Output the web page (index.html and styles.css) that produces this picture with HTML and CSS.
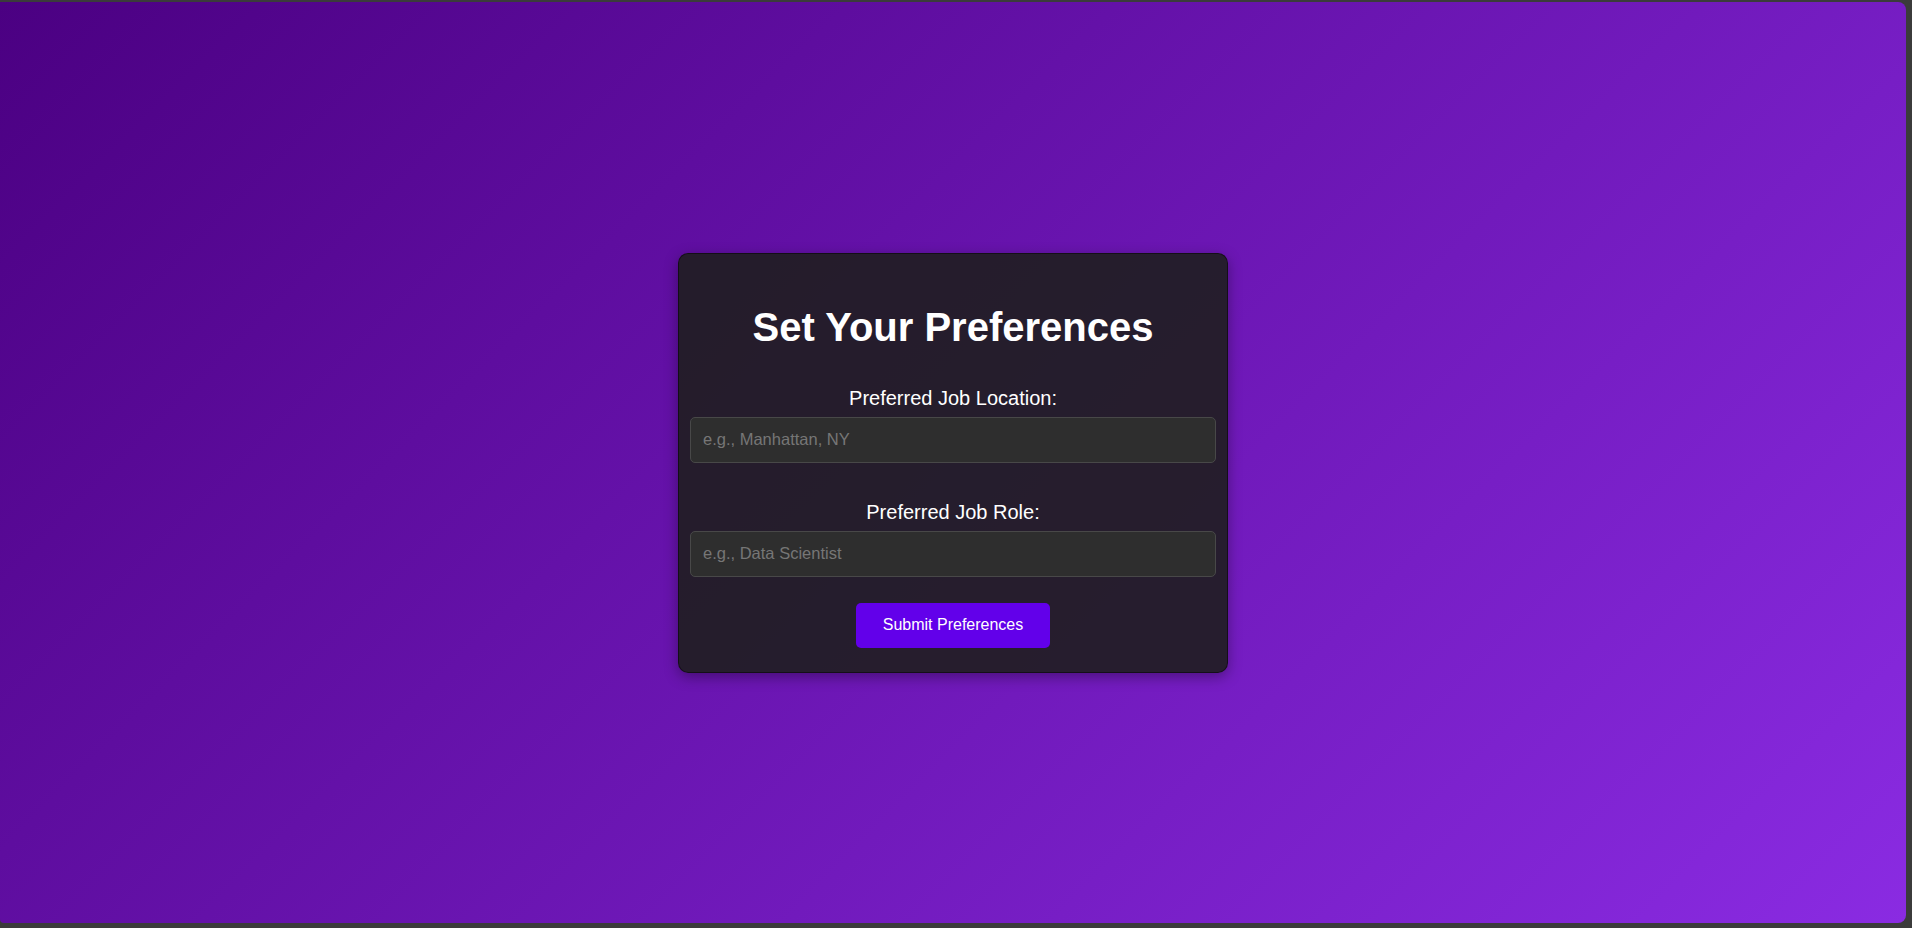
FILE: index.html
```html
<!DOCTYPE html>
<html lang="en">
<head>
<meta charset="utf-8">
<title>Set Your Preferences</title>
<link rel="stylesheet" href="styles.css">
</head>
<body>
<div class="window">
  <main class="page">
    <form class="card">
      <h1 class="title">Set Your Preferences</h1>
      <div class="group group-first">
        <label class="label" for="loc">Preferred Job Location:</label>
        <input class="field" id="loc" type="text" placeholder="e.g., Manhattan, NY">
      </div>
      <div class="group group-last">
        <label class="label" for="role">Preferred Job Role:</label>
        <input class="field" id="role" type="text" placeholder="e.g., Data Scientist">
      </div>
      <button class="submit" type="button">Submit Preferences</button>
    </form>
  </main>
</div>
</body>
</html>
```
FILE: styles.css
```css
html, body {
  margin: 0;
  padding: 0;
  height: 100%;
}
body {
  background: #3b3b3b;
  font-family: "Liberation Sans", Arial, sans-serif;
  overflow: hidden;
}
.window {
  box-sizing: border-box;
  height: 100%;
  padding: 2px 6px 5px 0;
  display: flex;
}
.page {
  flex: 1;
  display: flex;
  align-items: center;
  justify-content: center;
  background: linear-gradient(135deg, #4b0082 0%, #8a2be2 100%);
  border-radius: 0 8px 8px 4px;
}
.card {
  box-sizing: border-box;
  width: 550px;
  padding: 50px 11px 24px;
  background: rgba(30, 30, 30, 0.9);
  border: 1px solid rgba(0, 0, 0, 0.45);
  border-radius: 10px;
  box-shadow: 0 4px 14px rgba(0, 0, 0, 0.35);
  display: flex;
  flex-direction: column;
  align-items: center;
}
.title {
  margin: 0 0 37px;
  font-size: 40px;
  line-height: 46px;
  font-weight: bold;
  color: #ffffff;
  text-align: center;
}
.group {
  width: 100%;
  display: flex;
  flex-direction: column;
  align-items: center;
}
.group-first {
  margin-bottom: 38px;
}
.group-last {
  margin-bottom: 26px;
}
.label {
  font-size: 20px;
  line-height: 23px;
  color: #ffffff;
  margin-bottom: 7px;
}
.field {
  box-sizing: border-box;
  width: 100%;
  height: 46px;
  padding: 0 12px;
  background: #2e2e2e;
  border: 1px solid #484848;
  border-radius: 5px;
  color: #ffffff;
  font-family: "Liberation Sans", Arial, sans-serif;
  font-size: 16.5px;
  outline: none;
}
.field::placeholder {
  color: #767676;
}
.submit {
  box-sizing: border-box;
  height: 45px;
  padding: 0 27px;
  background: #6200ea;
  color: #ffffff;
  border: none;
  border-radius: 5px;
  font-family: "Liberation Sans", Arial, sans-serif;
  font-size: 16px;
  cursor: pointer;
}
```
